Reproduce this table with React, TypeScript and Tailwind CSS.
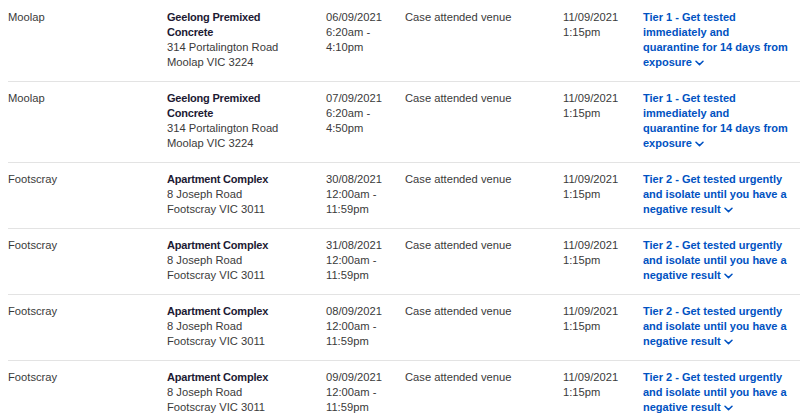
import React from "react";

type Row = {
  suburb: string;
  name: string[];
  address: string[];
  date: string[];
  notes: string;
  added: string[];
  tier: string[];
};

const rows: Row[] = [
  {
    suburb: "Moolap",
    name: ["Geelong Premixed", "Concrete"],
    address: ["314 Portalington Road", "Moolap VIC 3224"],
    date: ["06/09/2021", "6:20am -", "4:10pm"],
    notes: "Case attended venue",
    added: ["11/09/2021", "1:15pm"],
    tier: ["Tier 1 - Get tested", "immediately and", "quarantine for 14 days from", "exposure"],
  },
  {
    suburb: "Moolap",
    name: ["Geelong Premixed", "Concrete"],
    address: ["314 Portalington Road", "Moolap VIC 3224"],
    date: ["07/09/2021", "6:20am -", "4:50pm"],
    notes: "Case attended venue",
    added: ["11/09/2021", "1:15pm"],
    tier: ["Tier 1 - Get tested", "immediately and", "quarantine for 14 days from", "exposure"],
  },
  ...["30/08/2021", "31/08/2021", "08/09/2021", "09/09/2021"].map((d) => ({
    suburb: "Footscray",
    name: ["Apartment Complex"],
    address: ["8 Joseph Road", "Footscray VIC 3011"],
    date: [d, "12:00am -", "11:59pm"],
    notes: "Case attended venue",
    added: ["11/09/2021", "1:15pm"],
    tier: ["Tier 2 - Get tested urgently", "and isolate until you have a", "negative result"],
  })),
];

function Chevron() {
  return (
    <svg
      width="9"
      height="6"
      viewBox="0 0 9 6"
      className="inline-block ml-[3px] align-middle"
      fill="none"
    >
      <path d="M1 1.2 L4.5 4.6 L8 1.2" stroke="#0052c2" strokeWidth="1.5" strokeLinecap="round" strokeLinejoin="round" />
    </svg>
  );
}

export default function App() {
  return (
    <div
      className="w-[800px] h-[418px] overflow-hidden bg-white pl-2 pt-px"
      style={{ fontFamily: '"Liberation Sans", Arial, sans-serif' }}
    >
      {rows.map((r, i) => (
        <div
          key={i}
          className="grid grid-cols-[159px_159px_79px_158px_80px_1fr] border-b border-[#e3e3e3] pt-[9px] pb-[11px] text-[11.2px] leading-[15px] text-[#3a3a3a]"
        >
          <div>{r.suburb}</div>
          <div>
            {r.name.map((n, j) => (
              <div key={j} className="font-bold text-[11px] tracking-[-0.2px] text-[#1c1a33] whitespace-nowrap">
                {n}
              </div>
            ))}
            {r.address.map((a, j) => (
              <div key={j} className="whitespace-nowrap">{a}</div>
            ))}
          </div>
          <div>
            {r.date.map((d, j) => (
              <div key={j} className="whitespace-nowrap">{d}</div>
            ))}
          </div>
          <div className="whitespace-nowrap">{r.notes}</div>
          <div>
            {r.added.map((d, j) => (
              <div key={j} className="whitespace-nowrap">{d}</div>
            ))}
          </div>
          <div className="font-bold text-[11px] text-[#0052c2]">
            {r.tier.map((t, j) => (
              <div key={j} className="whitespace-nowrap">
                {t}
                {j === r.tier.length - 1 && <Chevron />}
              </div>
            ))}
          </div>
        </div>
      ))}
    </div>
  );
}
